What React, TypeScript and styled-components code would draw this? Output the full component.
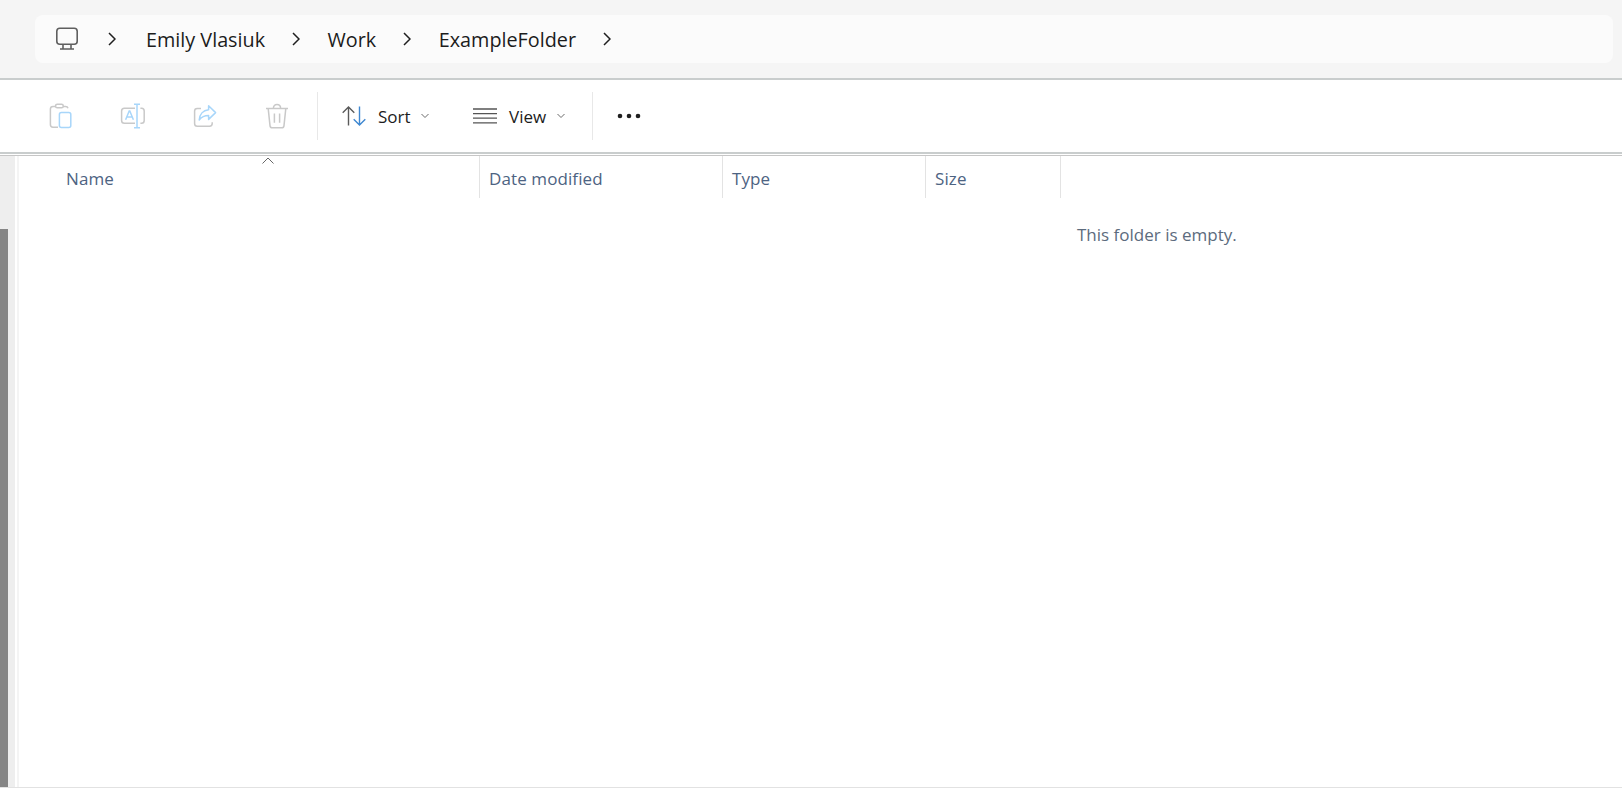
import React from "react";
import styled, { createGlobalStyle } from "styled-components";

const GlobalStyle = createGlobalStyle`
  html, body {
    margin: 0;
    padding: 0;
    height: 100%;
    background: #ffffff;
  }
  #root {
    height: 100%;
  }
`;

const Window = styled.div`
  width: 1622px;
  height: 788px;
  display: flex;
  flex-direction: column;
  overflow: hidden;
  font-family: "Open Sans", "Noto Sans", sans-serif;
  background: #ffffff;
`;

const AddressArea = styled.div`
  height: 78px;
  box-sizing: border-box;
  padding: 15px 9px 15px 35px;
  background: #f5f5f5;
`;

const AddressBar = styled.div`
  height: 48px;
  display: flex;
  align-items: center;
  padding-left: 20px;
  border-radius: 8px;
  background: #fbfbfb;
`;

const MonitorIcon = styled.svg`
  width: 24px;
  height: 24px;
  flex: none;
  margin-right: 29px;
`;

const Crumb = styled.span`
  font-size: 19.8px;
  color: #1c1c1c;
  margin-left: 28px;
  margin-right: 26.5px;

  &:first-of-type {
    margin-left: 30px;
  }
`;

const CrumbChevron = styled.svg`
  width: 8px;
  height: 14px;
  flex: none;
`;

const Rule = styled.div`
  height: 2px;
  flex: none;
  background: #c9cdcd;
`;

const ThinRule = styled.div`
  height: 1px;
  flex: none;
  margin-top: 1px;
  background: #c6c6c6;
`;

const Toolbar = styled.div`
  height: 72px;
  flex: none;
  display: flex;
  align-items: center;
  padding-left: 25px;
`;

const IconButton = styled.div`
  width: 72px;
  height: 32px;
  display: flex;
  align-items: center;
  justify-content: center;
`;

const ToolSeparator = styled.div`
  width: 1px;
  height: 48px;
  background: #e8e8e8;
  margin: 0 24px 0 4px;
`;

const MenuButton = styled.div<{ $width: number }>`
  width: ${(p) => p.$width}px;
  display: flex;
  align-items: center;
  font-size: 17px;
  color: #1c1c1c;
`;

const MenuLabel = styled.span`
  margin: 0 10.5px 0 12px;
`;

const Body = styled.div`
  flex: 1;
  display: flex;
  min-height: 0;
  border-bottom: 1px solid #e2e2e2;
`;

const Gutter = styled.div`
  width: 15px;
  flex: none;
  display: flex;
  justify-content: flex-start;
  align-items: flex-end;
  background: #eeeeee;
`;

const ScrollThumb = styled.div`
  width: 8px;
  height: 558px;
  background: #858585;
`;

const PaneEdge = styled.div`
  width: 2px;
  margin-left: 2px;
  flex: none;
  background: #f4f4f4;
`;

const Content = styled.div`
  flex: 1;
  display: flex;
  flex-direction: column;
`;

const HeaderRow = styled.div`
  height: 42px;
  display: flex;
  flex: none;
`;

const HeaderCell = styled.div<{ $width: number; $pad?: number }>`
  position: relative;
  width: ${(p) => p.$width}px;
  box-sizing: border-box;
  padding: 2px 0 0 ${(p) => p.$pad ?? 9}px;
  border-right: 1px solid #e3e3e3;
  display: flex;
  align-items: center;
  font-size: 17px;
  letter-spacing: 0.1px;
  color: #4d6382;
`;

const SortCaret = styled.svg`
  position: absolute;
  left: 243px;
  top: 1px;
  width: 12px;
  height: 7px;
`;

const EmptyNote = styled.div`
  margin: 25px 0 0 1058px;
  font-size: 17px;
  color: #5c6b7d;
`;

const Chevron = () => (
  <CrumbChevron viewBox="0 0 8 14" fill="none" stroke="#1f1f1f" strokeWidth="1.5">
    <path d="M1 1l6 6-6 6" />
  </CrumbChevron>
);

const Caret = () => (
  <svg width="8" height="6" viewBox="0 0 8 6" fill="none" stroke="#6b6b6b" strokeWidth="1">
    <path d="M.5 1l3.5 3.5L7.5 1" />
  </svg>
);

const Monitor = () => (
  <MonitorIcon viewBox="0 0 24 24" fill="none" stroke="#5f5f5f" strokeWidth="1.6">
    <rect x="1.8" y="1.3" width="20.4" height="16" rx="3" />
    <path d="M8 17.5v4M16 17.5v4M5 22h14" />
  </MonitorIcon>
);

const GREY = "#c9c9c9";
const SKY = "#a8d6fa";

const PasteIcon = () => (
  <svg width="24" height="26" viewBox="0 0 24 26" fill="none" strokeWidth="1.5">
    <path
      stroke={GREY}
      d="M9 24.2H4c-1.5 0-2.6-1-2.6-2.6V6c0-1.6 1.1-2.6 2.6-2.6h2.5M14 3.4h2.5c1.2 0 2.2.7 2.5 1.9"
    />
    <rect stroke={GREY} x="6.6" y="1.2" width="7.6" height="3.6" rx="1.6" />
    <rect stroke={SKY} x="10.4" y="9.4" width="11.4" height="15" rx="2" />
  </svg>
);

const RenameIcon = () => (
  <svg width="26" height="26" viewBox="0 0 26 26" fill="none" strokeWidth="1.5">
    <path
      stroke={GREY}
      d="M15 5.2H4.4C2.6 5.2 1.6 6.4 1.6 8v9.4c0 1.7 1 2.8 2.8 2.8H15M20.4 5.2h1.2c1.6 0 2.6 1.2 2.6 2.8v9.4c0 1.7-1 2.8-2.6 2.8h-1.2"
    />
    <path stroke={SKY} d="M14 1.2h6M14 24.8h6M17 1.2v23.6M5.6 16.8l3.6-8.8h.6l3.6 8.8M6.8 14h5.4" />
  </svg>
);

const ShareIcon = () => (
  <svg width="24" height="24" viewBox="0 0 24 24" fill="none" strokeWidth="1.5">
    <path
      stroke={GREY}
      d="M8 4.4H4.2c-1.6 0-2.6 1-2.6 2.6v12.4c0 1.7 1 2.8 2.6 2.8h12.4c1.6 0 2.6-1 2.6-2.6v-1.4"
    />
    <path
      stroke={SKY}
      strokeLinejoin="round"
      d="M15.6 1.8l7 6.8-7 6.8v-3.8c-3.6 0-6.8 1-9.4 4.4 .4-5.4 3.8-9.6 9.4-10.2z"
    />
  </svg>
);

const TrashIcon = () => (
  <svg width="24" height="26" viewBox="0 0 24 26" fill="none" stroke={GREY} strokeWidth="1.5">
    <path d="M1 5.4h22M8.4 5.2c0-2.2 1.4-3.8 3.6-3.8s3.6 1.6 3.6 3.8" />
    <path d="M3.2 5.6l1.8 17c.1 1.3 1 2.2 2.4 2.2h9.2c1.4 0 2.3-.9 2.4-2.2l1.8-17" />
    <path d="M9.4 10.6v9.2M14.6 10.6v9.2" />
  </svg>
);

const SortIcon = () => (
  <svg width="24" height="20" viewBox="0 0 24 20" fill="none" strokeWidth="1.4">
    <path stroke="#5a5a5a" d="M6.5 19.5V1M.7 6.8L6.5 1l5.8 5.8" />
    <path stroke="#3f88d1" d="M17.5.5V19M11.7 13.2l5.8 5.8 5.8-5.8" />
  </svg>
);

const ViewIcon = () => (
  <svg width="24" height="18" viewBox="0 0 24 18" fill="none" stroke="#555555" strokeWidth="1.3">
    <path d="M0 2h24M0 6.6h24M0 11.2h24M0 15.8h24" />
  </svg>
);

const MoreIcon = () => (
  <svg width="24" height="6" viewBox="0 0 24 6" fill="#1f1f1f">
    <circle cx="3" cy="3" r="2.3" />
    <circle cx="12" cy="3" r="2.3" />
    <circle cx="21" cy="3" r="2.3" />
  </svg>
);

const crumbs = ["Emily Vlasiuk", "Work", "ExampleFolder"];

const App = () => {
  return (
    <Window>
      <GlobalStyle />
      <AddressArea>
        <AddressBar>
          <Monitor />
          <Chevron />
          {crumbs.map((name) => (
            <React.Fragment key={name}>
              <Crumb>{name}</Crumb>
              <Chevron />
            </React.Fragment>
          ))}
        </AddressBar>
      </AddressArea>
      <Rule />
      <Toolbar>
        <IconButton>
          <PasteIcon />
        </IconButton>
        <IconButton>
          <RenameIcon />
        </IconButton>
        <IconButton>
          <ShareIcon />
        </IconButton>
        <IconButton>
          <TrashIcon />
        </IconButton>
        <ToolSeparator />
        <MenuButton $width={131}>
          <SortIcon />
          <MenuLabel>Sort</MenuLabel>
          <Caret />
        </MenuButton>
        <MenuButton $width={115}>
          <ViewIcon />
          <MenuLabel>View</MenuLabel>
          <Caret />
        </MenuButton>
        <ToolSeparator />
        <MoreIcon />
      </Toolbar>
      <Rule />
      <ThinRule />
      <Body>
        <Gutter>
          <ScrollThumb />
        </Gutter>
        <PaneEdge />
        <Content>
          <HeaderRow>
            <HeaderCell $width={461} $pad={47}>
              Name
              <SortCaret viewBox="0 0 12 7" fill="none" stroke="#666666" strokeWidth="1">
                <path d="M.5 6.5L6 1l5.5 5.5" />
              </SortCaret>
            </HeaderCell>
            <HeaderCell $width={243}>Date modified</HeaderCell>
            <HeaderCell $width={203}>Type</HeaderCell>
            <HeaderCell $width={135}>Size</HeaderCell>
          </HeaderRow>
          <EmptyNote>This folder is empty.</EmptyNote>
        </Content>
      </Body>
    </Window>
  );
};

export default App;
